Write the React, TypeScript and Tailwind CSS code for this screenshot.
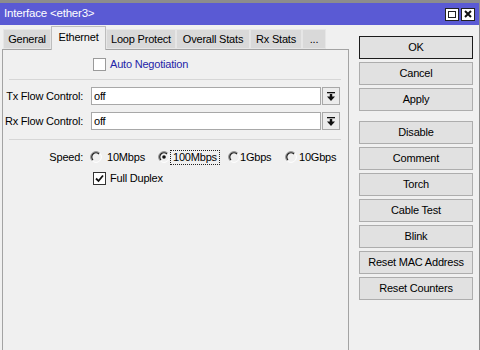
import React from "react";

function Radio({ checked }: { checked?: boolean }) {
  return (
    <svg width="12" height="12" viewBox="0 0 12 12" className="shrink-0">
      <path d="M2.2 9.8 A5.3 5.3 0 0 1 9.8 2.2" stroke="#8a8a8a" strokeWidth="1" fill="none" />
      <path d="M3 9 A4.2 4.2 0 0 1 9 3" stroke="#1e1e1e" strokeWidth="1.2" fill="none" />
      <path d="M9.8 2.2 A5.3 5.3 0 0 1 2.2 9.8" stroke="#ffffff" strokeWidth="1" fill="none" />
      {checked && <circle cx="6" cy="6" r="1.8" fill="#111" />}
    </svg>
  );
}

function Check({ checked, dim }: { checked?: boolean; dim?: boolean }) {
  return (
    <div
      className={`w-[13px] h-[13px] bg-white border flex items-center justify-center shrink-0 ${
        dim ? "border-[#9a9a9a]" : "border-[#333333]"
      }`}
    >
      {checked && (
        <svg width="9" height="9" viewBox="0 0 9 9">
          <path d="M1 4.5 L3.5 7 L8 1.5" stroke="#111" strokeWidth="1.8" fill="none" />
        </svg>
      )}
    </div>
  );
}

function DropBtn() {
  return (
    <div className="ml-[1px] w-[18px] h-[18px] bg-[#ececec] border border-[#a8a8a8] flex items-center justify-center">
      <svg width="8" height="9" viewBox="0 0 8 9">
        <rect x="0" y="0" width="8" height="1.3" fill="#111" />
        <rect x="2.8" y="2" width="2.4" height="3" fill="#111" />
        <polygon points="0,4.6 8,4.6 4,9" fill="#111" />
      </svg>
    </div>
  );
}

function Btn({ label, def }: { label: string; def?: boolean }) {
  return (
    <div
      className={`w-[114px] h-[23px] flex items-center justify-center bg-[#e1e1e1] border ${
        def ? "border-[#1c1c1c]" : "border-[#adadad]"
      }`}
    >
      {label}
    </div>
  );
}

const tabs: { label: string; w: number; active?: boolean }[] = [
  { label: "General", w: 48 },
  { label: "Ethernet", w: 55, active: true },
  { label: "Loop Protect", w: 70 },
  { label: "Overall Stats", w: 74 },
  { label: "Rx Stats", w: 52 },
  { label: "...", w: 24 },
];

export default function App() {
  return (
    <div className="w-[480px] h-[350px] overflow-hidden whitespace-nowrap bg-[#f0f0f0] flex flex-col border-t-[3px] border-r border-[#8c8c8c] text-[11px] tracking-[-0.2px] leading-none text-black font-['Liberation_Sans',Arial,sans-serif]">
      {/* Title bar */}
      <div className="h-[22px] bg-[#5a5ad4] flex items-center pl-[4px] pr-[4px] shrink-0">
        <span className="text-white flex-1 text-[11.5px]">Interface &lt;ether3&gt;</span>
        <div className="flex gap-[2px]">
          <div className="w-[14px] h-[13px] bg-white border border-[#222] flex items-center justify-center">
            <div className="w-[8px] h-[7px] border border-[#222]" />
          </div>
          <div className="w-[14px] h-[13px] bg-white border border-[#222] flex items-center justify-center">
            <svg width="8" height="8" viewBox="0 0 8 8">
              <path d="M1 1 L7 7 M7 1 L1 7" stroke="#111" strokeWidth="2" />
            </svg>
          </div>
        </div>
      </div>

      <div className="flex flex-1">
        {/* Left column */}
        <div className="w-[349px] pl-[2px] flex flex-col">
          <div className="h-[24px] flex items-end pl-[1px] shrink-0">
            {tabs.map((t) =>
              t.active ? (
                <div
                  key={t.label}
                  style={{ width: t.w }}
                  className="h-[24px] -mb-[1px] relative z-10 bg-[#f0f0f0] border-x border-t border-[#bdbdbd] flex items-center justify-center pb-[2px]"
                >
                  {t.label}
                </div>
              ) : (
                <div
                  key={t.label}
                  style={{ width: t.w }}
                  className="h-[20px] bg-[#d9d9d9] border border-[#e6e6e6] flex items-center justify-center"
                >
                  {t.label}
                </div>
              )
            )}
          </div>
          <div className="flex-1 border-l border-t border-r border-[#a3a3a3] flex flex-col">
            {/* Auto Negotiation */}
            <div className="mt-[8px] h-[13px] flex items-center pl-[90px]">
              <Check dim />
              <span className="ml-[4px] text-[#2424a8]">Auto Negotiation</span>
            </div>
            <div className="mt-[8px] ml-[6px] w-[332px] h-px bg-[#d6d6d6]" />
            {/* Tx */}
            <div className="mt-[7px] h-[18px] flex items-center">
              <div className="w-[80px] text-right">Tx Flow Control:</div>
              <div className="ml-[8px] w-[230px] h-[18px] bg-white border border-[#a8a8a8] flex items-center pl-[2px]">off</div>
              <DropBtn />
            </div>
            <div className="mt-[7px] h-[18px] flex items-center">
              <div className="w-[80px] text-right">Rx Flow Control:</div>
              <div className="ml-[8px] w-[230px] h-[18px] bg-white border border-[#a8a8a8] flex items-center pl-[2px]">off</div>
              <DropBtn />
            </div>
            <div className="mt-[9px] ml-[6px] w-[332px] h-px bg-[#d6d6d6]" />
            {/* Speed */}
            <div className="mt-[10px] h-[14px] flex items-center">
              <div className="w-[80px] text-right">Speed:</div>
              <div className="ml-[7px] w-[68px] flex items-center">
                <Radio />
                <span className="ml-[5px]">10Mbps</span>
              </div>
              <div className="w-[70px] flex items-center">
                <Radio checked />
                <span className="px-[2px] py-[1px] border border-dotted border-[#222]">100Mbps</span>
              </div>
              <div className="w-[57px] flex items-center">
                <Radio />
                <span className="ml-[0px]">1Gbps</span>
              </div>
              <div className="flex items-center">
                <Radio />
                <span className="ml-[2px]">10Gbps</span>
              </div>
            </div>
            <div className="mt-[8px] h-[13px] flex items-center pl-[90px]">
              <Check checked />
              <span className="ml-[4px]">Full Duplex</span>
            </div>
          </div>
        </div>

        {/* Right column */}
        <div className="flex-1 flex flex-col pt-[11px] pl-[10px] gap-[3px]">
          <Btn label="OK" def />
          <Btn label="Cancel" />
          <Btn label="Apply" />
          <div className="h-[4px]" />
          <Btn label="Disable" />
          <Btn label="Comment" />
          <Btn label="Torch" />
          <Btn label="Cable Test" />
          <Btn label="Blink" />
          <Btn label="Reset MAC Address" />
          <Btn label="Reset Counters" />
        </div>
      </div>
    </div>
  );
}
